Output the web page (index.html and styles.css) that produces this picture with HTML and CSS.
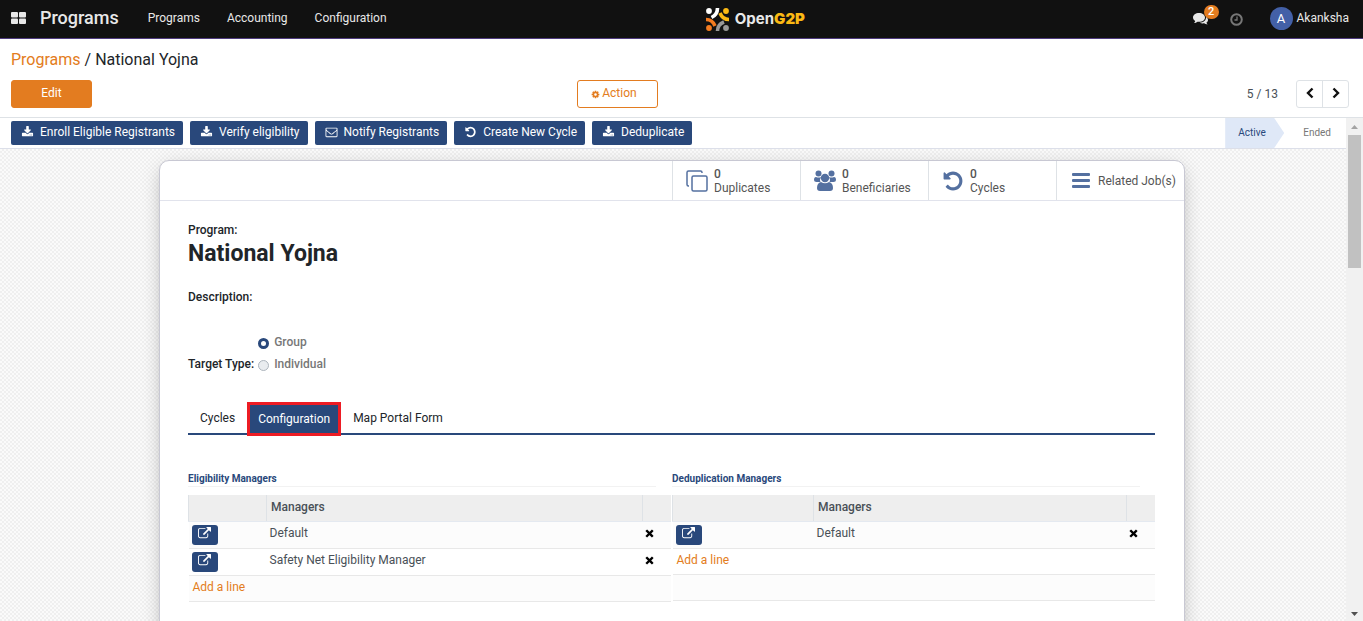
FILE: index.html
```html
<!DOCTYPE html>
<html lang="en">
<head>
<meta charset="utf-8">
<title>National Yojna - Programs</title>
<link rel="stylesheet" href="styles.css">
</head>
<body>
<svg class="sprite" aria-hidden="true">
  <symbol id="i-download" viewBox="0 0 1792 1792"><path d="M1344 1344q0-26-19-45t-45-19-45 19-19 45 19 45 45 19 45-19 19-45zm256 0q0-26-19-45t-45-19-45 19-19 45 19 45 45 19 45-19 19-45zm128-224v320q0 40-28 68t-68 28h-1472q-40 0-68-28t-28-68v-320q0-40 28-68t68-28h465l135 136q58 56 136 56t136-56l136-136h464q40 0 68 28t28 68zm-325-569q17 41-14 70l-448 448q-18 19-45 19t-45-19l-448-448q-31-29-14-70 17-39 59-39h256v-448q0-26 19-45t45-19h256q26 0 45 19t19 45v448h256q42 0 59 39z"/></symbol>
  <symbol id="i-mail" viewBox="0 0 1792 1792"><path d="M1664 1504v-768q-32 36-69 66-268 206-426 338-51 43-83 67t-86.500 48.500-102.500 24.500h-2q-48 0-102.500-24.500t-86.500-48.500-83-67q-158-132-426-338-37-30-69-66v768q0 13 9.500 22.500t22.500 9.500h1472q13 0 22.500-9.500t9.500-22.500zm0-1051v-24.500l-.5-13-3-12.500-5.500-9-9-7.500-14-2.500h-1472q-13 0-22.500 9.500t-9.500 22.500q0 168 147 284 193 152 401 317 6 5 35 29.500t46 37.500 44.500 31.500 50.500 27.500 43 9h2q20 0 43-9t50.500-27.500 44.500-31.500 46-37.500 35-29.500q208-165 401-317 54-43 100.500-115.500t46.500-131.500zm128-37v1088q0 66-47 113t-113 47h-1472q-66 0-113-47t-47-113v-1088q0-66 47-113t113-47h1472q66 0 113 47t47 113z"/></symbol>
  <symbol id="i-undo" viewBox="0 0 1792 1792"><path d="M1664 896q0 156-61 298t-164 245-245 164-298 61q-172 0-327-72.500t-264-204.500q-7-10-6.500-22.500t8.500-20.500l137-138q10-9 25-9 16 2 23 12 73 95 179 147t225 52q104 0 198.500-40.500t163.500-109.500 109.500-163.500 40.500-198.500-40.500-198.500-109.500-163.500-163.500-109.500-198.500-40.500q-98 0-188 35.500t-160 101.500l137 138q31 30 14 69-17 40-59 40h-448q-26 0-45-19t-19-45v-448q0-42 40-59 39-17 69 14l130 129q107-101 244.500-156.500t284.500-55.500q156 0 298 61t245 164 164 245 61 298z"/></symbol>
  <symbol id="i-link" viewBox="0 0 1792 1792"><path d="M1408 928v320q0 119-84.500 203.500t-203.500 84.500h-832q-119 0-203.500-84.500t-84.500-203.500v-832q0-119 84.500-203.500t203.500-84.500h704q14 0 23 9t9 23v64q0 14-9 23t-23 9h-704q-66 0-113 47t-47 113v832q0 66 47 113t113 47h832q66 0 113-47t47-113v-320q0-14 9-23t23-9h64q14 0 23 9t9 23zm384-864v512q0 26-19 45t-45 19-45-19l-176-176-652 652q-10 10-23 10t-23-10l-114-114q-10-10-10-23t10-23l652-652-176-176q-19-19-19-45t19-45 45-19h512q26 0 45 19t19 45z"/></symbol>
  <symbol id="i-cog" viewBox="0 0 1792 1792"><path d="M1152 896q0-106-75-181t-181-75-181 75-75 181 75 181 181 75 181-75 75-181zm512-109v222q0 12-8 23t-20 13l-185 28q-19 54-39 91 35 50 107 138 10 12 10 25t-9 23q-27 37-99 108t-94 71q-12 0-26-9l-138-108q-44 23-91 38-16 136-29 186-7 28-36 28h-222q-14 0-24.500-8.500t-11.500-21.500l-28-184q-49-16-90-37l-141 107q-10 9-25 9-14 0-25-11-126-114-165-168-7-10-7-23 0-12 8-23 15-21 51-66.500t54-70.500q-27-50-41-99l-183-27q-13-2-21-12.500t-8-23.500v-222q0-12 8-23t19-13l186-28q14-46 39-92-40-57-107-138-10-12-10-24 0-10 9-23 26-36 98.500-107.500t94.500-71.500q13 0 26 10l138 107q44-23 91-38 16-136 29-186 7-28 36-28h222q14 0 24.500 8.500t11.500 21.500l28 184q49 16 90 37l142-107q9-9 24-9 13 0 25 10 129 119 165 170 7 8 7 22 0 12-8 23-15 21-51 66.500t-54 70.500q26 50 41 98l183 28q13 2 21 12.500t8 23.500z"/></symbol>
  <symbol id="i-times" viewBox="0 0 10 10"><path d="M2.300 2.300l5.400 5.400M7.700 2.300L2.300 7.700" fill="none" stroke="currentColor" stroke-width="2.600" stroke-linecap="square"/></symbol>
</svg>

<header class="navbar">
  <button class="apps" aria-label="Home menu"><svg width="15" height="12" viewBox="0 0 15 12" fill="currentColor"><rect width="7" height="5.500" rx="1"/><rect x="8" width="7" height="5.500" rx="1"/><rect y="6.500" width="7" height="5.500" rx="1"/><rect x="8" y="6.500" width="7" height="5.500" rx="1"/></svg></button>
  <a class="brand" href="#">Programs</a>
  <nav class="menu"><a href="#">Programs</a><a href="#">Accounting</a><a href="#">Configuration</a></nav>
  <a class="logo" href="#">
    <svg width="23" height="23" viewBox="0 0 23 23" fill="none" stroke-width="3.600">
      <circle cx="3" cy="3" r="2.900" fill="#fff"/><circle cx="20" cy="3" r="2.900" fill="#fbb914"/><circle cx="3" cy="20" r="2.900" fill="#f47c20"/><circle cx="20" cy="20" r="2.900" fill="#999"/>
      <path d="M11.500 0q0 6.500-6 9.500" stroke="#fff"/><path d="M14 5q2.500 6.500 9 6.500" stroke="#fbb914"/><path d="M0 11.500q6.500 0 9 6.500" stroke="#f47c20"/><path d="M18 14q-6.500 2.500-6.500 9" stroke="#999"/>
    </svg>
    <span>Open<b>G2P</b></span>
  </a>
  <div class="systray">
    <button class="chat" aria-label="Messages"><svg width="16" height="14" viewBox="0 0 16 14" fill="currentColor"><path d="M6 1c3.400 0 6 1.900 6 4.400S9.400 9.800 6 9.800c-.5 0-1 0-1.500-.1-1 .9-2.200 1.300-3.600 1.400.7-.6 1.200-1.300 1.300-2.200C.9 8.100 0 6.800 0 5.400 0 2.900 2.600 1 6 1z"/><path d="M13 5c1.200.7 2 1.700 2 2.900 0 1.100-.6 2-1.600 2.700.1.800.6 1.400 1.200 1.900-1.300 0-2.500-.5-3.300-1.200-1.700.3-3.300.1-4.600-.5C10.500 10.500 13.300 8.500 13 5z"/></svg><span class="badge">2</span></button>
    <button class="clock" aria-label="Activities"><svg width="13" height="13" viewBox="0 0 13 13" fill="none" stroke="currentColor"><circle cx="6.500" cy="6.500" r="5.300" stroke-width="2"/><path d="M7 3.500v3.500H4.500" stroke-width="1.300"/></svg></button>
    <button class="user"><span class="avatar">A</span>Akanksha</button>
  </div>
</header>

<section class="control">
  <div class="crumbs"><a href="#">Programs</a> / <span>National Yojna</span></div>
  <div class="control-row">
    <div><button class="btn edit">Edit</button></div>
    <button class="btn action"><svg width="9" height="9" fill="currentColor"><use href="#i-cog"/></svg>Action</button>
    <div class="pager"><span>5 / 13</span><div class="pager-group">
      <button aria-label="Previous"><svg width="8" height="12" viewBox="0 0 8 12"><path d="M6.500 1.500L2 6l4.500 4.500" fill="none" stroke="currentColor" stroke-width="2.400"/></svg></button><button aria-label="Next"><svg width="8" height="12" viewBox="0 0 8 12"><path d="M1.500 1.500L6 6l-4.500 4.500" fill="none" stroke="currentColor" stroke-width="2.400"/></svg></button></div></div>
  </div>
</section>

<div class="body">
  <main class="view">
    <div class="statusbar">
      <div class="status-actions">
        <button><svg><use href="#i-download"/></svg>Enroll Eligible Registrants</button>
        <button><svg><use href="#i-download"/></svg>Verify eligibility</button>
        <button><svg><use href="#i-mail"/></svg>Notify Registrants</button>
        <button><svg><use href="#i-undo"/></svg>Create New Cycle</button>
        <button><svg><use href="#i-download"/></svg>Deduplicate</button>
      </div>
      <div class="stages"><span class="stage current">Active</span><span class="stage">Ended</span></div>
    </div>
    <div class="canvas">
      <article class="sheet">
        <div class="stats">
          <button><svg width="22" height="22" viewBox="0 0 22 22" fill="none" stroke="currentColor" stroke-width="1.500"><rect x="6" y="6" width="15" height="15" rx="1.500"/><path d="M16 3V2.500Q16 1 14.500 1h-12Q1 1 1 2.500v12Q1 16 2.500 16H3"/></svg><span><b>0</b>Duplicates</span></button>
          <button><svg width="22" height="22" viewBox="0 0 22 22" fill="currentColor"><circle cx="4.500" cy="3.500" r="3"/><circle cx="17.500" cy="3.500" r="3"/><path d="M2 7q2.500 1 5 0-1.500 2.500-.5 5H2.500Q0 12 0 10q0-3 2-3zM20 7q-2.500 1-5 0 1.500 2.500.5 5h4q2.500 0 2.500-2 0-3-2-3z"/><circle cx="11" cy="8" r="4.200"/><path d="M7 12q4 2.500 8 0 4 1 4 6 0 3-3 3H6q-3 0-3-3 0-5 4-6z"/></svg><span><b>0</b>Beneficiaries</span></button>
          <button><svg width="22" height="22" fill="currentColor"><use href="#i-undo"/></svg><span><b>0</b>Cycles</span></button>
          <button class="single"><svg width="18" height="22" viewBox="0 0 18 22" fill="currentColor"><rect y="3" width="18" height="3" rx="1"/><rect y="9" width="18" height="3" rx="1"/><rect y="15" width="18" height="3" rx="1"/></svg><span>Related Job(s)</span></button>
        </div>
        <div class="content">
          <div class="label">Program:</div>
          <h1>National Yojna</h1>
          <div class="label">Description:</div>
          <fieldset class="target">
            <legend class="label">Target Type:</legend>
            <div class="options">
              <label><input type="radio" name="target" checked>Group</label>
              <label><input type="radio" name="target">Individual</label>
            </div>
          </fieldset>
          <div class="tabs"><button>Cycles</button><button class="selected">Configuration</button><button>Map Portal Form</button></div>
          <div class="groups">
            <section class="group">
              <h2>Eligibility Managers</h2>
              <table class="eligibility">
                <thead><tr><th class="open"></th><th>Managers</th><th class="remove"></th></tr></thead>
                <tbody>
                  <tr><td><button class="link" aria-label="Open"><svg><use href="#i-link"/></svg></button></td><td class="name">Default</td><td><button class="delete" aria-label="Delete"><svg><use href="#i-times"/></svg></button></td></tr>
                  <tr><td><button class="link" aria-label="Open"><svg><use href="#i-link"/></svg></button></td><td class="name">Safety Net Eligibility Manager</td><td><button class="delete" aria-label="Delete"><svg><use href="#i-times"/></svg></button></td></tr>
                  <tr class="short"><td colspan="3"><a href="#">Add a line</a></td></tr>
                </tbody>
              </table>
            </section>
            <section class="group">
              <h2>Deduplication Managers</h2>
              <table class="dedup">
                <thead><tr><th class="open"></th><th>Managers</th><th class="remove"></th></tr></thead>
                <tbody>
                  <tr><td><button class="link" aria-label="Open"><svg><use href="#i-link"/></svg></button></td><td class="name">Default</td><td><button class="delete" aria-label="Delete"><svg><use href="#i-times"/></svg></button></td></tr>
                  <tr class="short"><td colspan="3"><a href="#">Add a line</a></td></tr>
                  <tr class="short"><td colspan="3"></td></tr>
                </tbody>
              </table>
            </section>
          </div>
        </div>
      </article>
    </div>
  </main>
  <div class="scrollbar" aria-hidden="true"><svg width="7" height="4" viewBox="0 0 7 4"><path d="M0 4l3.500-4L7 4z" fill="#a3a3a3"/></svg><div class="thumb"></div><svg width="7" height="4" viewBox="0 0 7 4"><path d="M0 0l3.500 4L7 0z" fill="#505050"/></svg></div>
</div>
</body>
</html>
```
FILE: styles.css
```css
* { box-sizing: border-box; }
body { margin: 0; height: 100vh; display: flex; flex-direction: column; overflow: hidden; font: 12px/18px Roboto, "Liberation Sans", sans-serif; color: #212529; background: #fff; }
button { font: inherit; color: inherit; border: 0; padding: 0; background: none; }
a { color: #e37c20; text-decoration: none; }
svg { display: block; flex: none; }
.sprite { position: absolute; width: 0; height: 0; }

.navbar { flex: none; display: grid; grid-template-columns: auto auto 1fr auto 1fr; align-items: center; height: 39px; padding: 0 14px 2px 11px; background: #111; border-bottom: 1px solid #4f3c80; color: #e8e8e8; }
.navbar a { color: #e8e8e8; }
.apps { margin-right: 14px; }
.brand { font-size: 18px; font-weight: 500; margin-right: 29px; }
.menu { display: flex; gap: 27px; }
.logo { display: flex; align-items: center; gap: 6px; font: 700 15px/20px Inter, sans-serif; padding: 2px 0 0 14px; }
.logo b { color: #fbb914; }
.systray { display: flex; align-items: center; justify-content: flex-end; }
.chat { position: relative; margin-right: 21px; }
.badge { position: absolute; left: 11px; top: -5px; min-width: 15px; height: 14px; border-radius: 7px; background: #e37c20; color: #fff; font: 500 11px/14px Roboto, sans-serif; text-align: center; }
.systray svg { margin-top: 2px; }
.clock { color: #777; margin-right: 27px; }
.user { display: flex; align-items: center; gap: 4px; }
.avatar { width: 23px; height: 23px; border-radius: 50%; background: #4360a7; font-size: 13px; line-height: 23px; color: #fff; }

.control { flex: none; padding: 9px 14px 9px 11px; border-bottom: 1px solid #dee2e6; }
.crumbs { font-size: 16px; line-height: 24px; padding-bottom: 8px; }
.control-row { display: grid; grid-template-columns: 42.3% auto 1fr; align-items: center; }
.btn { display: flex; align-items: center; justify-content: center; width: 81px; height: 28px; padding-bottom: 2px; border: 1px solid #e37c20; border-radius: 3px; }
.edit { background: #e37c20; color: #fff; }
.action { color: #e37c20; gap: 2px; padding-right: 7px; background: #fff; }
.action svg { margin-top: 2px; }
.pager { display: flex; align-items: center; justify-content: flex-end; gap: 18px; color: #495057; }
.pager-group { display: flex; border: 1px solid #dee2e6; border-radius: 3px; color: #111; }
.pager-group button { display: flex; align-items: center; justify-content: center; width: 25px; height: 26px; padding-bottom: 2px; }
.pager-group button + button { width: 26px; border-left: 1px solid #dee2e6; }

.body { flex: 1; min-height: 0; display: flex; }
.view { flex: 1; min-width: 0; display: flex; flex-direction: column; }
.statusbar { flex: none; display: flex; justify-content: space-between; height: 31px; padding-left: 11px; border-bottom: 1px solid #dcdfe9; }
.status-actions { display: flex; align-items: center; gap: 7px; }
.status-actions button { display: flex; align-items: center; gap: 6px; height: 24px; padding: 0 8px 2px 10px; border-radius: 2px; background: #29487b; color: #fff; }
.status-actions svg { width: 13px; height: 12px; fill: currentColor; }
.stages { display: flex; font-size: 10px; line-height: 30px; color: #777; }
.stage { padding: 0 15px 0 19px; }
.current { width: 59px; padding: 0 0 0 13px; background: #dfe8f7; color: #29487b; clip-path: polygon(0 0, 49px 0, 100% 50%, 49px 100%, 0 100%); }
.canvas { flex: 1; min-height: 0; overflow: hidden; padding: 11px 18px 0 16px; background: conic-gradient(#efefef 25%, #fafafa 0 50%, #efefef 0 75%, #fafafa 0) 0 0 / 4px 4px; }
.sheet { max-width: 1026px; min-height: 600px; margin: 0 auto; background: #fff; border: 1px solid #c8c8d3; border-radius: 10px; box-shadow: 0 5px 20px -5px rgba(0, 0, 0, .35); }
.stats { display: flex; justify-content: flex-end; border-bottom: 1px solid #e1e3ec; }
.stats button { display: flex; align-items: center; gap: 6px; width: 128px; height: 39px; padding-left: 13px; border-left: 1px solid #dee2e6; text-align: left; line-height: 14px; color: #555; }
.stats .single { gap: 8px; padding-left: 15px; }
.stats svg { color: #5470a0; }
.stats b { display: block; font-weight: 500; }

.content { padding: 20px 29px 0 28px; }
.label { font-weight: 500; }
h1 { margin: 0 0 19px; font-size: 23px; line-height: 30px; font-weight: 700; }
.target { display: flex; align-items: flex-end; gap: 4px; margin: 27px 0 29px; padding: 0; border: 0; }
.target legend { float: left; padding: 0; }
.options { display: grid; gap: 4px; font-weight: 500; color: #777; }
.options label { display: flex; align-items: center; gap: 5px; }
input[type="radio"] { appearance: none; width: 11px; height: 11px; margin: 2px 0 0; border: 1px solid #adb5bd; border-radius: 50%; background: #e9ecef; }
input[type="radio"]:checked { border: 3px solid #29487b; background: #fff; }

.tabs { display: flex; align-items: flex-end; border-bottom: 2px solid #29487b; }
.tabs button { height: 31px; padding: 0 12px; }
.tabs .selected { height: 34px; margin-bottom: -3px; padding: 0 8px 1px; border: 3px solid #ed1c24; background: #29487b; color: #fff; }
.groups { display: grid; grid-template-columns: 1fr 1fr; gap: 1px; padding-top: 36px; align-items: start; }
h2 { margin: 0 15px 8px 0; font-size: 10px; line-height: 15px; font-weight: 700; color: #29487b; border-bottom: 1px solid #f2f2f2; }
table { width: 100%; border-collapse: collapse; table-layout: fixed; color: #495057; }
th { height: 26px; padding: 0 4px 1px; text-align: left; font-weight: 500; background: #eee; border-left: 1px solid #dee2e6; border-bottom: 1px solid #e4e9f0; }
td { height: 27px; padding: 0 3px; border-bottom: 1px solid #e8e8e8; }
.name { padding-bottom: 3px; }
.short td { height: 26px; padding: 0 4px 2px; }
tbody tr:nth-child(odd) { background: #fcfcfc; }
.eligibility .open { width: 78px; }
.dedup .open { width: 141px; }
.remove { width: 29px; }
.link { display: grid; place-items: center; width: 26px; height: 20px; padding-bottom: 3px; border-radius: 3px; background: #29487b; color: #fff; }
.link svg { width: 13px; height: 13px; fill: currentColor; }
.delete { display: block; padding-bottom: 2px; color: #000; }
.delete svg { width: 9px; height: 9px; }

.scrollbar { width: 17px; display: flex; flex-direction: column; align-items: center; justify-content: space-between; padding: 7px 0 5px; background: #f1f1f1; }
.thumb { width: 13px; height: 133px; margin: 6px 0 auto; background: #c1c1c1; }
```
